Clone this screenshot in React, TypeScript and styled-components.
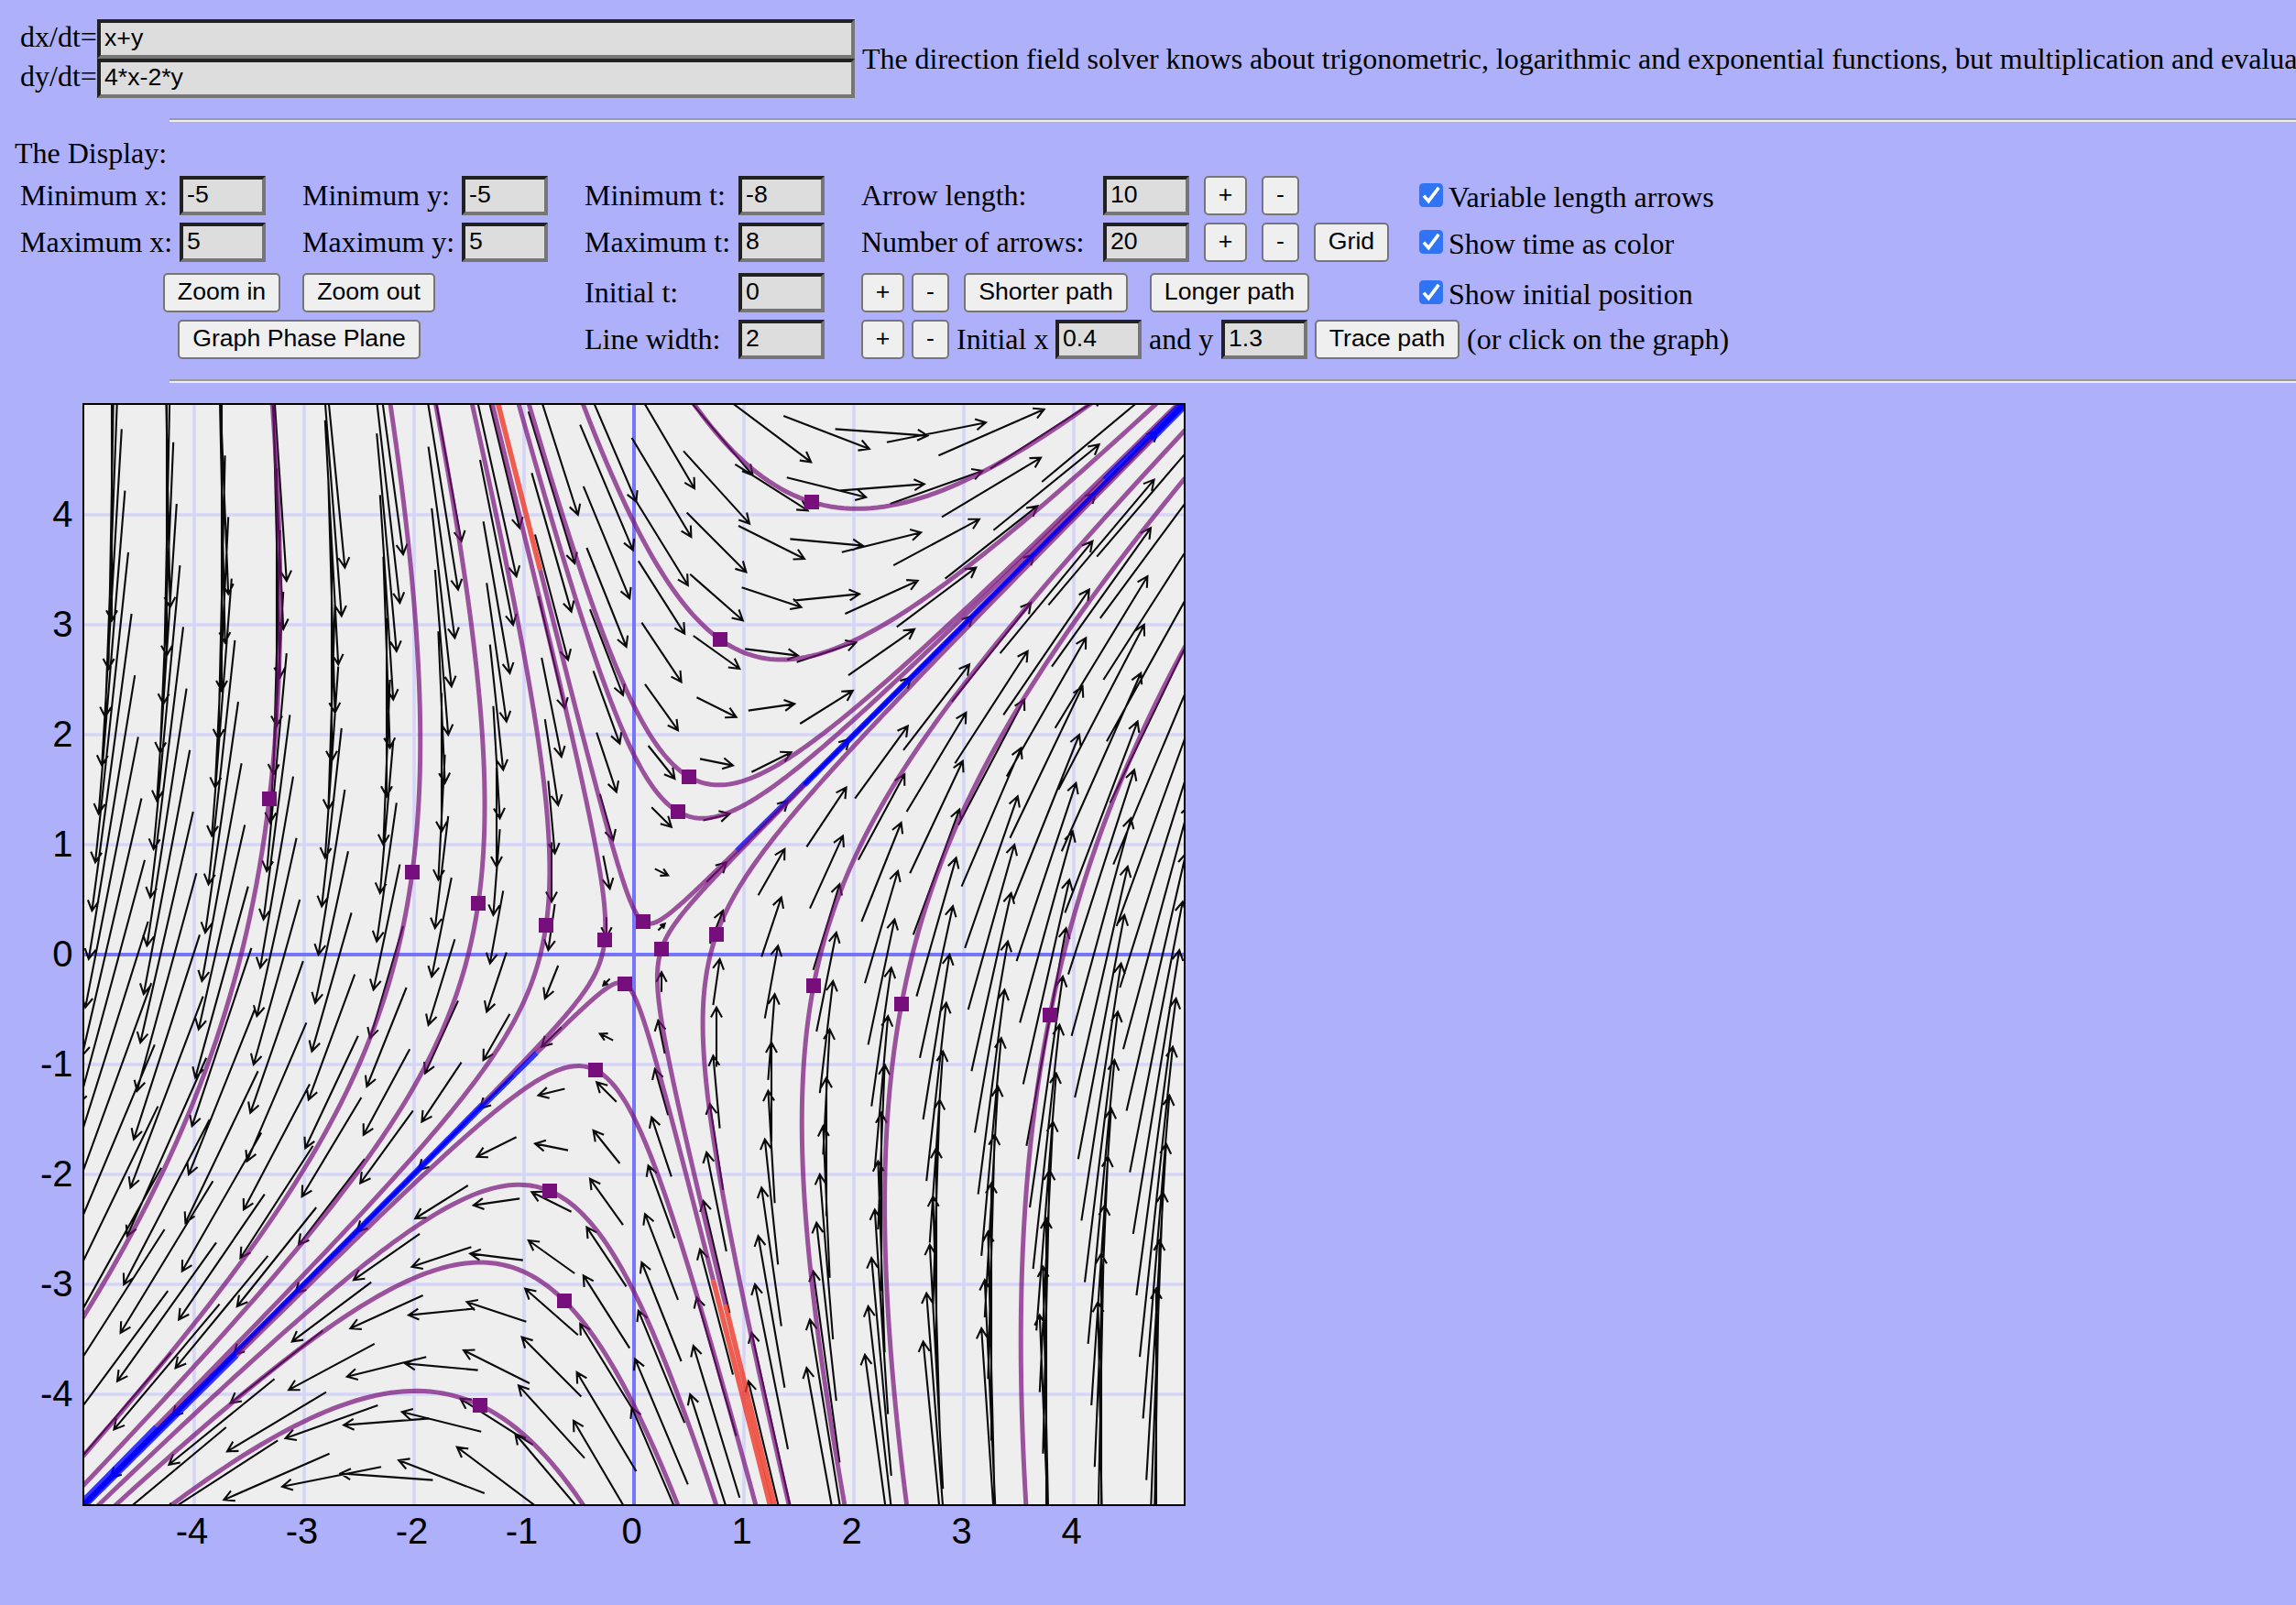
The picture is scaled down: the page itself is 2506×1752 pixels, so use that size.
import React from "react";
import styled, { createGlobalStyle } from "styled-components";

const SERIF = '"Liberation Serif", "Times New Roman", Times, serif';
const SANS = '"Liberation Sans", Arial, Helvetica, sans-serif';

const GlobalStyle = createGlobalStyle`
  html, body { margin: 0; padding: 0; background: #aeb0fa; overflow: hidden; }
  #root { display: block; }
`;

const Page = styled.main`
  display: flex;
  flex-direction: column;
  width: 2506px;
  height: 1752px;
  overflow: hidden;
  background: #aeb0fa;
  color: #000;
  font: 32px/43px ${SERIF};
`;

const Equations = styled.section`
  display: flex;
  align-items: center;
  height: 86px;
  margin: 21px 0 22px 22px;
`;

const EquationList = styled.div`
  display: flex;
  flex-direction: column;
  flex: none;
  width: 911px;
  margin-right: 8px;
  line-height: 39px;
`;

const Row = styled.div<{ $after?: number }>`
  display: flex;
  align-items: flex-start;
  height: 43px;
  margin-bottom: ${(p) => p.$after ?? 0}px;
`;

const Label = styled.label<{ $width?: number; $gap?: number; $drop?: number }>`
  flex: none;
  width: ${(p) => (p.$width ? `${p.$width}px` : "auto")};
  margin-left: ${(p) => p.$gap ?? 0}px;
  padding-top: ${(p) => p.$drop ?? 0}px;
  white-space: nowrap;
`;

const Field = styled.input<{ $width: number }>`
  flex: none;
  box-sizing: border-box;
  width: ${(p) => p.$width}px;
  height: 43px;
  margin: 0;
  padding: 0 4px 2px;
  border: 4px solid;
  border-color: #212121 #767676 #767676 #212121;
  border-radius: 0;
  outline: none;
  background: #ddd;
  color: #000;
  font: 26.67px ${SANS};
`;

const Button = styled.button<{ $width: number; $gap?: number }>`
  flex: none;
  box-sizing: border-box;
  width: ${(p) => p.$width}px;
  height: 43px;
  margin: 0 0 0 ${(p) => p.$gap ?? 0}px;
  padding: 0 0 2px;
  border: 2px solid #767676;
  border-radius: 5px;
  background: #efefef;
  color: #000;
  font: 26.67px ${SANS};
  white-space: nowrap;
`;

const Note = styled.p`
  flex: none;
  margin: 0;
  white-space: nowrap;
  word-spacing: -0.2px;
`;

const Rule = styled.hr`
  box-sizing: border-box;
  width: 2321px;
  height: 4px;
  margin: 0 0 0 185px;
  border: 0;
  border-top: 2px solid #9a9a9a;
  background: #eee;
`;

const Display = styled.section`
  display: flex;
  flex-direction: column;
  padding: 13px 0 22px 22px;
`;

const Heading = styled.p`
  height: 43px;
  margin: 0 0 3px -6px;
`;

const CheckMark = styled.svg`
  display: block;
  width: 26px;
  height: 26px;
  margin-top: 8px;
`;

const Plot = styled.svg`
  display: block;
  flex: none;
  width: 1320px;
  height: 1300px;
`;

function Check({ label, gap }: { label: string; gap: number }) {
  return (
    <>
      <Label $gap={gap} $width={32}>
        <CheckMark viewBox="0 0 26 26">
          <rect width="26" height="26" rx="4.5" fill="#3074f6" />
          <path d="M5 13.6 L10.2 19.6 L21.3 4.8" fill="none" stroke="#fff" strokeWidth="3.6" />
        </CheckMark>
      </Label>
      <Label $drop={2}>{label}</Label>
    </>
  );
}

/* Plot geometry: the square [-5, 5] x [-5, 5] drawn at 120 px per unit. */
const UNIT = 120;
const LEFT = 92;
const TOP = 24;
const SIZE = 1200;
const px = (x: number) => LEFT + (x + 5) * UNIT;
const py = (y: number) => TOP + (5 - y) * UNIT;
const pt = (x: number, y: number) => `${x.toFixed(2)} ${y.toFixed(2)}`;

const TICKS = [-4, -3, -2, -1, 0, 1, 2, 3, 4];

/* Initial positions, in sixtieths of a unit. */
const STARTS: [number, number][] = [
  [-199, 85], [-121, 45], [-85, 28], [-48, 16], [-16, 8],
  [97, 247], [47, 172], [30, 97], [24, 78], [5, 18],
  [15, 3], [45, 11], [-5, -16], [-21, -63], [-46, -129],
  [-38, -189], [-84, -246], [98, -17], [146, -27], [227, -33],
];

function arrows(): string {
  const scale = 0.12;
  const parts: string[] = [];
  for (let i = 0; i < 20; i++) {
    for (let j = 0; j < 20; j++) {
      const cx = -4.75 + i * 0.5;
      const cy = -4.75 + j * 0.5;
      const vx = scale * (cx + cy);
      const vy = scale * (4 * cx - 2 * cy);
      if (vx === 0 && vy === 0) continue;
      const hx = px(cx + vx / 2);
      const hy = py(cy + vy / 2);
      const back = Math.atan2(vy, -vx);
      const barb = Math.min(12.5, Math.hypot(vx, vy) * UNIT * 0.55);
      const wing = (turn: number) =>
        pt(hx + barb * Math.cos(back + turn), hy + barb * Math.sin(back + turn));
      parts.push(
        `M${pt(px(cx - vx / 2), py(cy - vy / 2))}L${pt(hx, hy)}` +
          `M${wing(0.5)}L${pt(hx, hy)}L${wing(-0.5)}`
      );
    }
  }
  return parts.join("");
}

/* Closed-form solution of dx/dt = x+y, dy/dt = 4x-2y. */
function trajectory(sx: number, sy: number, from: number, to: number): string {
  const a = (4 * sx + sy) / 5;
  const b = (sx - sy) / 5;
  const steps = 200;
  let path = "";
  for (let n = 0; n <= steps; n++) {
    const t = from + ((to - from) * n) / steps;
    const u = a * Math.exp(2 * t);
    const v = b * Math.exp(-3 * t);
    const x = u + v;
    const y = u - 4 * v;
    if (Math.abs(x) > 8 || Math.abs(y) > 8) {
      if (t > 0) break;
      path = "";
      continue;
    }
    path += `${path ? "L" : "M"}${pt(px(x), py(y))}`;
  }
  return path;
}

const SPANS = [
  { from: -2, to: -1, color: "#f03324", opacity: 0.78, width: 5.6 },
  { from: -1, to: 1, color: "#760f7b", opacity: 0.7, width: 5 },
  { from: 1, to: 2.2, color: "#0000ff", opacity: 0.78, width: 5.6 },
];

function PhasePlane() {
  return (
    <Plot viewBox="0 0 1320 1300">
      <defs>
        <clipPath id="plane">
          <rect x={LEFT} y={TOP} width={SIZE} height={SIZE} />
        </clipPath>
      </defs>
      <rect x={LEFT - 1} y={TOP - 1} width={SIZE + 2} height={SIZE + 2} fill="#eee" stroke="#000" strokeWidth="2" />
      <g clipPath="url(#plane)" fill="none">
        {TICKS.filter((k) => k !== 0).map((k) => (
          <path
            key={k}
            d={`M${px(k)} ${TOP}v${SIZE}M${LEFT} ${py(k)}h${SIZE}`}
            stroke="#d5d5f8"
            strokeWidth="3.6"
          />
        ))}
        <path d={`M${px(0)} ${TOP}v${SIZE}M${LEFT} ${py(0)}h${SIZE}`} stroke="#7676fb" strokeWidth="4" />
        <path d={arrows()} stroke="#000" strokeOpacity="0.96" strokeWidth="2.1" />
        {STARTS.map(([x, y]) =>
          SPANS.map((s) => (
            <path
              key={`${x},${y},${s.from}`}
              d={trajectory(x / 60, y / 60, s.from, s.to)}
              stroke={s.color}
              strokeOpacity={s.opacity}
              strokeWidth={s.width}
            />
          ))
        )}
        {STARTS.map(([x, y]) => (
          <rect key={`${x},${y}`} x={px(x / 60) - 8} y={py(y / 60) - 8} width="16" height="16" fill="#760f7b" />
        ))}
      </g>
      <g fontFamily={SANS} fontSize="40" fill="#000">
        {TICKS.map((k) => (
          <text key={`x${k}`} x={px(k) - 2.5} y={TOP + SIZE + 43} textAnchor="middle">
            {k}
          </text>
        ))}
        {TICKS.map((k) => (
          <text key={`y${k}`} x={79.5} y={py(k) + 13} textAnchor="end">
            {k}
          </text>
        ))}
      </g>
    </Plot>
  );
}

export default function App() {
  return (
    <Page>
      <GlobalStyle />
      <Equations>
        <EquationList>
          <Row>
            <Label $width={84}>dx/dt=</Label>
            <Field $width={827} defaultValue="x+y" />
          </Row>
          <Row>
            <Label $width={84}>dy/dt=</Label>
            <Field $width={827} defaultValue="4*x-2*y" />
          </Row>
        </EquationList>
        <Note>
          The direction field solver knows about trigonometric, logarithmic and exponential functions, but
          multiplication and evalua
        </Note>
      </Equations>
      <Rule />
      <Display>
        <Heading>The Display:</Heading>
        <Row $after={8}>
          <Label $width={174}>Minimum x:</Label>
          <Field $width={94} defaultValue="-5" />
          <Label $gap={40} $width={174}>Minimum y:</Label>
          <Field $width={94} defaultValue="-5" />
          <Label $gap={40} $width={168}>Minimum t:</Label>
          <Field $width={94} defaultValue="-8" />
          <Label $gap={40} $width={264}>Arrow length:</Label>
          <Field $width={94} defaultValue="10" />
          <Button $gap={16} $width={47}>+</Button>
          <Button $gap={16} $width={41}>-</Button>
          <Check gap={131} label="Variable length arrows" />
        </Row>
        <Row $after={12}>
          <Label $width={174}>Maximum x:</Label>
          <Field $width={94} defaultValue="5" />
          <Label $gap={40} $width={174}>Maximum y:</Label>
          <Field $width={94} defaultValue="5" />
          <Label $gap={40} $width={168}>Maximum t:</Label>
          <Field $width={94} defaultValue="8" />
          <Label $gap={40} $width={264}>Number of arrows:</Label>
          <Field $width={94} defaultValue="20" />
          <Button $gap={16} $width={47}>+</Button>
          <Button $gap={16} $width={41}>-</Button>
          <Button $gap={16} $width={82}>Grid</Button>
          <Check gap={33} label="Show time as color" />
        </Row>
        <Row $after={8}>
          <Button $gap={156} $width={128}>Zoom in</Button>
          <Button $gap={24} $width={145}>Zoom out</Button>
          <Label $gap={163} $width={168}>Initial t:</Label>
          <Field $width={94} defaultValue="0" />
          <Button $gap={40} $width={47}>+</Button>
          <Button $gap={8} $width={41}>-</Button>
          <Button $gap={16} $width={179}>Shorter path</Button>
          <Button $gap={24} $width={174}>Longer path</Button>
          <Check gap={120} label="Show initial position" />
        </Row>
        <Row>
          <Button $gap={172} $width={265}>Graph Phase Plane</Button>
          <Label $gap={179} $width={168}>Line width:</Label>
          <Field $width={94} defaultValue="2" />
          <Button $gap={40} $width={47}>+</Button>
          <Button $gap={8} $width={41}>-</Button>
          <Label $gap={8} $width={108}>Initial x</Label>
          <Field $width={94} defaultValue="0.4" />
          <Label $gap={8} $width={79}>and y</Label>
          <Field $width={94} defaultValue="1.3" />
          <Button $gap={8} $width={158}>Trace path</Button>
          <Label $gap={8}>(or click on the graph)</Label>
        </Row>
      </Display>
      <Rule />
      <PhasePlane />
    </Page>
  );
}
